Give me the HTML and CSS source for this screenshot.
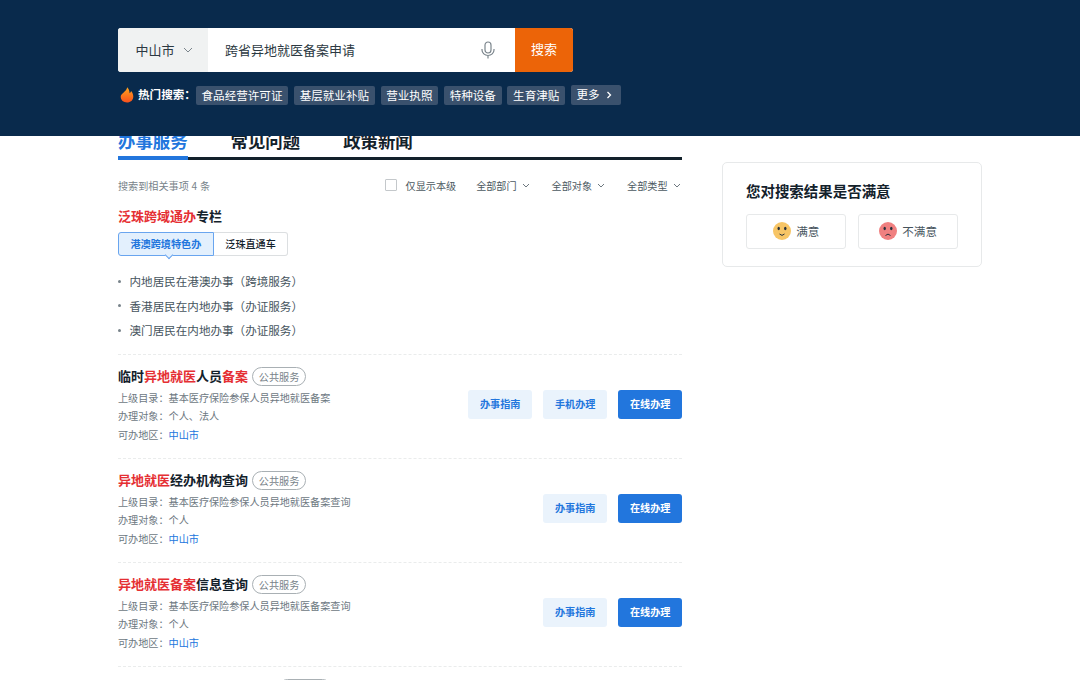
FILE: index.html
```html
<!DOCTYPE html>
<html lang="zh-CN">
<head>
    <meta charset="UTF-8">
    <meta name="viewport" content="width=device-width, initial-scale=1.0">
    <title>搜索</title>
    <link rel="stylesheet" href="styles.css">
</head>
<body>
    <header class="header">
        <form class="search">
            <div class="search-city">
                中山市
                <svg class="city-arrow" viewBox="0 0 10 6"><path d="M1 1l4 4 4-4"/></svg>
            </div>
            <div class="search-field">
                <span>跨省异地就医备案申请</span>
                <svg class="mic" viewBox="0 0 14 18">
                    <rect x="4" y="1" width="6" height="11" rx="3"/>
                    <path d="M1 8v1a6 5.5 0 0 0 12 0V8M7 14.500v3"/>
                </svg>
            </div>
            <button type="button" class="search-btn">搜索</button>
        </form>
        <div class="hot">
            <svg class="flame" viewBox="0 0 14 16">
                <defs>
                    <linearGradient id="fire" x1="0" y1="0" x2="0" y2="1">
                        <stop offset="0" stop-color="#ffa51f"/>
                        <stop offset="1" stop-color="#f9501c"/>
                    </linearGradient>
                </defs>
                <path fill="url(#fire)" d="M7.200 .3C8.600 1.800 9.600 3.800 9.600 6.200C10.400 5.700 10.900 4.900 11.100 3.900C12.600 5.600 13.300 7.600 13.300 9.500C13.300 13.200 10.500 15.500 7 15.500S.7 13.200 .7 9.800C.7 6.200 6.500 5 7.200 .3Z"/>
            </svg>
            <span class="hot-label">热门搜索：</span>
            <div class="hot-list">
                <a class="hot-tag">食品经营许可证</a>
                <a class="hot-tag">基层就业补贴</a>
                <a class="hot-tag">营业执照</a>
                <a class="hot-tag">特种设备</a>
                <a class="hot-tag">生育津贴</a>
                <a class="hot-tag hot-more">更多
                    <svg class="more-arrow" viewBox="0 0 6 8"><path d="M1.500 1l3 3-3 3"/></svg>
                </a>
            </div>
        </div>
    </header>

    <div class="container">
        <main class="results">
            <nav class="tabs">
                <a class="tab active">办事服务</a>
                <a class="tab">常见问题</a>
                <a class="tab">政策新闻</a>
            </nav>

            <div class="filters">
                <span class="count">搜索到相关事项 4 条</span>
                <span class="check"><i class="checkbox"></i>仅显示本级</span>
                <span class="filter">全部部门<svg class="arrow" viewBox="0 0 8 6"><path d="M1 1l3 3 3-3"/></svg></span>
                <span class="filter">全部对象<svg class="arrow" viewBox="0 0 8 6"><path d="M1 1l3 3 3-3"/></svg></span>
                <span class="filter">全部类型<svg class="arrow" viewBox="0 0 8 6"><path d="M1 1l3 3 3-3"/></svg></span>
            </div>

            <section class="special">
                <h3 class="title"><em>泛珠跨域通办</em>专栏</h3>
                <div class="switch">
                    <a class="switch-item on">港澳跨境特色办</a>
                    <a class="switch-item">泛珠直通车</a>
                </div>
                <ul class="links">
                    <li>内地居民在港澳办事（跨境服务）</li>
                    <li>香港居民在内地办事（办证服务）</li>
                    <li>澳门居民在内地办事（办证服务）</li>
                </ul>
            </section>

            <section class="item">
                <div class="info">
                    <div class="item-head">
                        <h3 class="title">临时<em>异地就医</em>人员<em>备案</em></h3>
                        <span class="badge">公共服务</span>
                    </div>
                    <p>上级目录：基本医疗保险参保人员异地就医备案</p>
                    <p>办理对象：个人、法人</p>
                    <p>可办地区：<a>中山市</a></p>
                </div>
                <div class="actions">
                    <button class="btn">办事指南</button>
                    <button class="btn">手机办理</button>
                    <button class="btn primary">在线办理</button>
                </div>
            </section>

            <section class="item">
                <div class="info">
                    <div class="item-head">
                        <h3 class="title"><em>异地就医</em>经办机构查询</h3>
                        <span class="badge">公共服务</span>
                    </div>
                    <p>上级目录：基本医疗保险参保人员异地就医备案查询</p>
                    <p>办理对象：个人</p>
                    <p>可办地区：<a>中山市</a></p>
                </div>
                <div class="actions">
                    <button class="btn">办事指南</button>
                    <button class="btn primary">在线办理</button>
                </div>
            </section>

            <section class="item">
                <div class="info">
                    <div class="item-head">
                        <h3 class="title"><em>异地就医备案</em>信息查询</h3>
                        <span class="badge">公共服务</span>
                    </div>
                    <p>上级目录：基本医疗保险参保人员异地就医备案查询</p>
                    <p>办理对象：个人</p>
                    <p>可办地区：<a>中山市</a></p>
                </div>
                <div class="actions">
                    <button class="btn">办事指南</button>
                    <button class="btn primary">在线办理</button>
                </div>
            </section>

            <section class="item">
                <div class="info">
                    <div class="item-head">
                        <h3 class="title title-wide"></h3>
                        <span class="badge"></span>
                    </div>
                </div>
            </section>
        </main>

        <aside class="feedback">
            <h2>您对搜索结果是否满意</h2>
            <div class="feedback-row">
                <button class="vote">
                    <svg class="face" viewBox="0 0 18 18">
                        <circle cx="9" cy="9" r="9" fill="#f7c566"/>
                        <ellipse cx="5.700" cy="6.500" rx="1.200" ry="1.700" fill="#26303b"/>
                        <ellipse cx="12.300" cy="6.500" rx="1.200" ry="1.700" fill="#26303b"/>
                        <path d="M6.500 12q2.500 2.800 5 0" stroke="#26303b" fill="none"/>
                    </svg>
                    满意
                </button>
                <button class="vote">
                    <svg class="face" viewBox="0 0 18 18">
                        <circle cx="9" cy="9" r="9" fill="#f08080"/>
                        <ellipse cx="5.700" cy="6.500" rx="1.200" ry="1.700" fill="#26303b"/>
                        <ellipse cx="12.300" cy="6.500" rx="1.200" ry="1.700" fill="#26303b"/>
                        <path d="M6.500 13.500q2.500-2.800 5 0" stroke="#26303b" fill="none"/>
                    </svg>
                    不满意
                </button>
            </div>
        </aside>
    </div>
</body>
</html>
```
FILE: styles.css
```css
* {
    box-sizing: border-box;
}
body {
    margin: 0;
    font-family: "Noto Sans CJK SC", sans-serif;
    font-size: 10.12px;
    color: #13212b;
    background: #fff;
}
h2, h3, p, ul {
    margin: 0;
    padding: 0;
}
button {
    font-family: inherit;
    padding: 0;
    border: none;
    cursor: pointer;
}
svg {
    fill: none;
    flex: none;
}

/* header */
.header {
    position: fixed;
    top: 0;
    left: 0;
    right: 0;
    z-index: 10;
    height: 136.3px;
    padding: 28px 0 0 118px;
    background: #092a4c;
}
.search {
    display: flex;
    width: 455px;
    height: 43.5px;
    border-radius: 3px;
    overflow: hidden;
    background: #fff;
    font-size: 13.01px;
}
.search-city {
    display: flex;
    align-items: center;
    width: 90px;
    padding-left: 17.5px;
    padding-bottom: 1px;
    background: #f0f2f2;
    color: #2c3942;
}
.city-arrow {
    width: 10px;
    height: 6px;
    margin: 2px 0 0 8px;
    stroke: #7b858c;
}
.search-field {
    flex: 1;
    display: flex;
    align-items: center;
    justify-content: space-between;
    padding: 0 20px 1px 17px;
    color: #2c3942;
}
.mic {
    width: 14px;
    height: 18px;
    margin-top: 1px;
    stroke: #7b858c;
    stroke-width: 1.2;
}
.search-btn {
    width: 58px;
    padding-bottom: 2px;
    background: #ec6408;
    color: #fff;
    font-size: 13.01px;
}
.hot {
    display: flex;
    align-items: center;
    margin-top: 13px;
    font-size: 11.57px;
    line-height: 19px;
    color: #fff;
}
.flame {
    width: 14px;
    height: 16px;
    margin: 1px 4px 0 2px;
}
.hot-label {
    font-weight: bold;
}
.hot-list {
    display: flex;
    align-items: flex-end;
    gap: 5.8px;
}
.hot-tag {
    padding: 0 5.7px;
    border-radius: 2px;
    background: #3a516d;
}
.hot-more {
    display: flex;
    align-items: center;
    width: 50px;
    height: 20px;
}
.more-arrow {
    width: 6px;
    height: 8px;
    margin-left: 6px;
    stroke: #fff;
    stroke-width: 1.3;
}

/* page */
.container {
    display: flex;
    align-items: flex-start;
    height: 680px;
    overflow: hidden;
    padding: 124px 0 0 118px;
}
.results {
    width: 564px;
}
.tabs {
    display: flex;
    gap: 43px;
    height: 36px;
    border-bottom: 3px solid #13212b;
    font-size: 17.4px;
    font-weight: bold;
}
.tab {
    height: 36px;
    line-height: 33px;
}
.tab.active {
    color: #2276dd;
    border-bottom: 4px solid #2276dd;
}
.filters {
    display: flex;
    align-items: center;
    height: 20px;
    margin-top: 15px;
    color: #4c5961;
}
.count {
    flex: 1;
    color: #78838a;
    word-spacing: 0.5px;
}
.check {
    display: flex;
    align-items: center;
}
.checkbox {
    width: 12px;
    height: 12px;
    margin-right: 8.5px;
    border: 1px solid #c4c8cb;
    border-radius: 1px;
}
.filter {
    display: flex;
    align-items: center;
    margin-left: 20px;
}
.filter + .filter {
    margin-left: 20.5px;
}
.arrow {
    width: 8px;
    height: 6px;
    margin: 1px 1.500px 0 5px;
    stroke: #6d787f;
}
.title {
    font-size: 13.01px;
    line-height: 20px;
    font-weight: bold;
}
.title em {
    font-style: normal;
    color: #e52f33;
}
.special {
    height: 159px;
    padding-top: 11px;
}
.switch {
    display: flex;
    height: 24px;
    margin-top: 5.5px;
    line-height: 22.5px;
    font-weight: 500;
}
.switch-item {
    border: 1px solid #dcdfe1;
    border-left: none;
    border-radius: 0 3px 3px 0;
    padding: 0 11.5px;
}
.switch-item.on {
    position: relative;
    border: 1px solid #69a5ef;
    border-radius: 3px 0 0 3px;
    background: #e3f0fd;
    color: #2276dd;
    font-weight: bold;
}
/* pointer under the active switch */
.switch-item.on::after {
    content: "";
    position: absolute;
    left: 47px;
    bottom: -3px;
    width: 5px;
    height: 5px;
    border: solid #69a5ef;
    border-width: 0 1px 1px 0;
    background: #e3f0fd;
    transform: rotate(45deg);
}
.links {
    margin-top: 13.5px;
    list-style: none;
    font-size: 11.57px;
    line-height: 24.5px;
    color: #46545d;
}
.links li {
    display: flex;
    align-items: center;
}
.links li::before {
    content: "";
    width: 3px;
    height: 3px;
    margin-right: 8.5px;
    border-radius: 50%;
    background: #78838a;
}

/* result items */
.item {
    display: flex;
    justify-content: space-between;
    height: 104px;
    padding-top: 11px;
    border-top: 1px dashed #eaecec;
}
.item-head {
    display: flex;
    align-items: center;
    gap: 4px;
    height: 20px;
    margin-bottom: 2.5px;
}
.title-wide {
    width: 156px;
}
.badge {
    width: 54px;
    height: 19px;
    line-height: 17px;
    text-align: center;
    border: 1px solid #a9b0b4;
    border-radius: 10px;
    color: #78838a;
}
.info p {
    line-height: 18.5px;
    color: #6d787f;
}
.info p a {
    color: #2276dd;
}
.actions {
    display: flex;
    gap: 11.3px;
    padding-top: 24px;
}
.btn {
    width: 63.7px;
    height: 29px;
    padding-bottom: 2px;
    border-radius: 3px;
    background: #eaf3fc;
    color: #2276dd;
    font-size: 10.12px;
    font-weight: bold;
}
.btn.primary {
    background: #2276dd;
    color: #fff;
}

/* feedback card */
.feedback {
    width: 260px;
    height: 105px;
    margin: 38px 0 0 40px;
    padding: 17px 23px 0;
    border: 1px solid #e7e9ea;
    border-radius: 5px;
}
.feedback h2 {
    font-size: 14.46px;
    line-height: 22px;
}
.feedback-row {
    display: flex;
    gap: 11.500px;
    margin-top: 12px;
}
.vote {
    flex: 1;
    display: flex;
    align-items: center;
    justify-content: center;
    gap: 5.500px;
    height: 35px;
    padding-bottom: 1px;
    border: 1px solid #e7e9ea;
    border-radius: 3px;
    background: #fff;
    color: #46545d;
    font-size: 11.57px;
}
.face {
    width: 18px;
    height: 18px;
}
```
